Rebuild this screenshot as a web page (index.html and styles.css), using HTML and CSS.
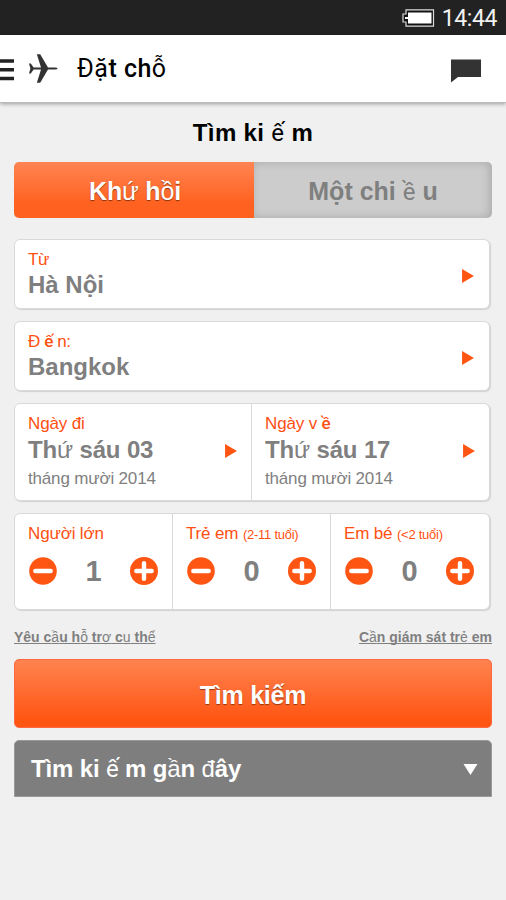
FILE: index.html
```html
<!DOCTYPE html>
<html lang="vi">
<head>
<meta charset="utf-8">
<title>Đặt chỗ</title>
<link rel="stylesheet" href="styles.css">
</head>
<body>
<div class="status">
  <svg class="battery" width="33" height="18" viewBox="0 0 33 18"><path d="M4 .8H31.5V17.2H4V13H1V5H4Z" fill="#111" stroke="#ddd" stroke-width="1.2"/><path d="M6 3.5H29.5V14.5H6V10H3V8H6Z" fill="#fff"/></svg>
  <span class="clock">14:44</span>
</div>
<header class="bar">
  <svg class="menu" width="14" height="22" viewBox="0 0 14 22"><path d="M0 2H14M0 10.8H14M0 19.5H14" stroke="#222" stroke-width="3.4"/></svg>
  <svg class="plane" width="29" height="29" viewBox="0 0 29 29"><path fill="#333" d="M0 9.5H1.8L4.6 13.4H12L8 .8V.3H11.2L19 13.4H26Q28.6 13.5 28.6 14.5T26 15.6H19L11.2 28.7H8V28.2L12 15.6H4.6L1.8 19.5H0L1.4 14.5Z"/></svg>
  <h1 class="title">Đặ<b>t ch</b>ỗ</h1>
  <svg class="chat" width="30" height="24" viewBox="0 0 30 24"><path fill="#333" d="M0 .5H30V18H7L0 23.5Z"/></svg>
</header>
<main class="page">
  <h2 class="heading">Tìm ki <i class="n">ế</i> m</h2>
  <div class="tabs">
    <div class="tab on"><span class="tab-one">Kh<i>ứ</i> h<i>ồ</i>i</span></div>
    <div class="tab"><span class="tab-two">Một chi <i class="n">ề</i> u</span></div>
  </div>
  <section class="card place"><div class="cell"><div class="label from">Từ</div><div class="value">Hà Nội</div><svg class="arrow" viewBox="0 0 11 13"><path d="M0 0L11 6.5L0 13Z"/></svg></div></section>
  <section class="card place"><div class="cell"><div class="label to">Đ <i class="e">ế</i> n:</div><div class="value">Bangkok</div><svg class="arrow" viewBox="0 0 11 13"><path d="M0 0L11 6.5L0 13Z"/></svg></div></section>
  <section class="card dates">
    <div class="cell"><div class="label">Ngày đi</div><div class="value">Th<i>ứ</i> sáu 03</div><div class="month">tháng mười 2014</div><svg class="arrow" viewBox="0 0 11 13"><path d="M0 0L11 6.5L0 13Z"/></svg></div>
    <div class="cell"><div class="label">Ngày v <i class="e">ề</i></div><div class="value">Th<i>ứ</i> sáu 17</div><div class="month">tháng mười 2014</div><svg class="arrow" viewBox="0 0 11 13"><path d="M0 0L11 6.5L0 13Z"/></svg></div>
  </section>
  <section class="card guests">
    <div class="cell"><div class="label">Người lớn</div><div class="stepper"><svg viewBox="0 0 28 28"><circle cx="14" cy="14" r="13.8"/><path d="M6.3 14H21.7"/></svg><span>1</span><svg viewBox="0 0 28 28"><circle cx="14" cy="14" r="14"/><path d="M6.3 14H21.7M14 6.3V21.7"/></svg></div></div>
    <div class="cell"><div class="label">Trẻ em <small>(2-11 tuổi)</small></div><div class="stepper"><svg viewBox="0 0 28 28"><circle cx="14" cy="14" r="13.8"/><path d="M6.3 14H21.7"/></svg><span>0</span><svg viewBox="0 0 28 28"><circle cx="14" cy="14" r="14"/><path d="M6.3 14H21.7M14 6.3V21.7"/></svg></div></div>
    <div class="cell"><div class="label">Em bé <small>(&lt;2 tuổi)</small></div><div class="stepper"><svg viewBox="0 0 28 28"><circle cx="14" cy="14" r="13.8"/><path d="M6.3 14H21.7"/></svg><span>0</span><svg viewBox="0 0 28 28"><circle cx="14" cy="14" r="14"/><path d="M6.3 14H21.7M14 6.3V21.7"/></svg></div></div>
  </section>
  <nav class="links"><a>Yêu c<i>ầ</i>u h<i>ỗ</i> tr<i>ợ</i> c<i>ụ</i> th<i>ể</i></a><a>C<i>ầ</i>n giám sát tr<i>ẻ</i> em</a></nav>
  <div class="search"><span>Tìm kiếm</span></div>
  <div class="recent"><span>Tìm ki <i class="n">ế</i> m g<i>ầ</i>n <i>đ</i>ây</span><svg width="15" height="11" viewBox="0 0 14 11"><path d="M0 0H14L7 11Z" fill="#fff"/></svg></div>
</main>
</body>
</html>
```
FILE: styles.css
```css
* { box-sizing: border-box; }
body { margin: 0; height: 900px; background: #f0f0f0; font-family: "Liberation Sans", sans-serif; color: #7f7f7f; overflow: hidden; }
i { font-style: normal; font-weight: 400; }
.n { font-family: Roboto, sans-serif; font-size: 24px; line-height: 1; }
svg { display: block; flex: none; }
.status { height: 35px; background: #222; display: flex; align-items: center; justify-content: flex-end; padding-right: 9px; }
.battery { margin-right: 7px; }
.clock { font: 23px/35px Roboto, sans-serif; padding-top: 2px; color: #f2f2f2; letter-spacing: -.4px; }
.bar { height: 68px; background: #fff; display: flex; align-items: center; border-bottom: 1px solid #bbb; box-shadow: 0 1px 4px rgba(0,0,0,.35); }
.menu { margin-top: 2px; }
.plane { margin: 0 0 0 15px; }
.title { margin: 0 0 0 19px; font: 400 25px/34px Roboto, sans-serif; letter-spacing: .5px; color: #000; flex: 1; padding-top: 1px; }
.title b { font-weight: 500; }
.chat { margin: 4px 25px 0 0; }
.page { padding: 15px 14px 0; }
.heading { margin: 0; font-size: 24px; line-height: 30px; color: #000; text-align: center; letter-spacing: .35px; }
.tabs { display: flex; height: 56px; margin-top: 14px; border-radius: 5px; overflow: hidden; }
.tab { flex: 1; display: flex; align-items: center; justify-content: center; font-size: 25px; line-height: 32px; font-weight: 700; padding-top: 2px; background: #ccc; box-shadow: inset -2px 0 10px rgba(0,0,0,.18); }
.tab-one { letter-spacing: -.2px; }
.tab.on { color: #fff; padding-left: 2px; text-shadow: 0 1px 1px rgba(90,30,0,.7); background: linear-gradient(#ff8452, #ff6120 75%); box-shadow: none; }
.card { width: 476px; display: flex; background: #fff; border: 1px solid #d9d9d9; border-radius: 6px; box-shadow: 1px 1px 1px #d2d2d2; margin-bottom: 12px; }
.place { height: 70px; }
.tabs + .card { margin-top: 21px; }
.dates { height: 98px; }
.guests { height: 97px; margin-bottom: 0; }
.cell { position: relative; flex: 1; padding: 10px 12px 0 13px; }
.cell + .cell { border-left: 1px solid #d9d9d9; }
.dates .cell:first-child { flex: 0 0 236px; }
.guests .cell { flex: 0 0 158px; }
.guests .cell:first-child { flex-basis: 157px; }
.label { height: 20px; font-size: 17px; line-height: 20px; color: #ff5012; white-space: nowrap; letter-spacing: -.15px; }
.from, .to { letter-spacing: -.4px; }
.label .e { font: 500 17px/1 Roboto, sans-serif; }
.label small { font-size: 13px; letter-spacing: -.25px; }
.value { font-size: 24px; line-height: 30px; font-weight: 700; white-space: nowrap; }
.dates .value { margin-top: 1px; letter-spacing: -.15px; }
.month { font-size: 17px; line-height: 26px; margin-top: 1px; letter-spacing: -.17px; }
.arrow { position: absolute; right: 15px; top: 29px; width: 12px; height: 14px; fill: #ff5512; }
.dates .arrow { top: 40px; right: 14px; }
.stepper { display: flex; justify-content: space-between; align-items: center; padding: 11px 2px 0 1px; font-size: 29px; line-height: 30px; font-weight: 700; }
.stepper span { padding-top: 1px; }
.stepper svg { width: 28px; height: 28px; }
.stepper circle { fill: #ff5512; }
.stepper path { stroke: #fff; stroke-width: 4.4; stroke-linecap: round; }
.links { display: flex; justify-content: space-between; margin-top: 17px; font-size: 14px; font-weight: 700; line-height: 20px; }
.links a { text-decoration: underline; text-decoration-skip-ink: none; text-decoration-thickness: 1px; text-underline-offset: 1px; }
.search { height: 69px; margin-top: 12px; border: 1px solid #ff6840; border-radius: 5px; background: linear-gradient(#ff834f, #ff5513 90%); color: #fff; display: flex; justify-content: center; align-items: center; padding-top: 3px; font-size: 25px; letter-spacing: -.25px; font-weight: 700; text-shadow: 0 1px 1px rgba(90,30,0,.65); }
.recent { height: 57px; margin-top: 12px; border: 1px solid #999; border-radius: 5px 5px 0 0; background: #7e7e7e; color: #fff; display: flex; align-items: center; justify-content: space-between; padding: 1px 13px 0 16px; font-size: 24px; line-height: 30px; letter-spacing: -.15px; font-weight: 700; }
```
